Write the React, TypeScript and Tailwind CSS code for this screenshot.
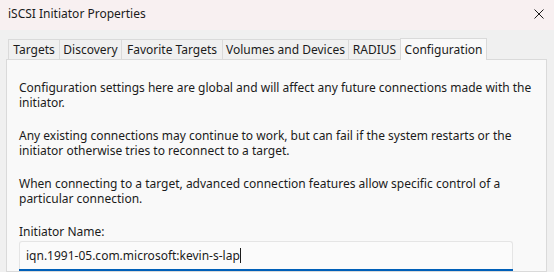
import React from "react";

const tabs = [
  { label: "Targets", w: "w-[52px]" },
  { label: "Discovery", w: "w-[63px]" },
  { label: "Favorite Targets", w: "w-[102px]" },
  { label: "Volumes and Devices", w: "w-[127px]" },
  { label: "RADIUS", w: "w-[53px]" },
];

export default function App() {
  return (
    <div
      className="w-[554px] h-[272px] overflow-hidden bg-[#f0f0f0] text-[#1b1b1b] flex flex-col"
      style={{ fontFamily: '"Noto Sans", "Open Sans", sans-serif' }}
    >
      <div className="h-[30px] shrink-0 bg-[#f8f0f1] flex items-center justify-between pl-[8px] pr-[10px]">
        <span className="text-[12px] leading-[15px] -mt-[3px]">iSCSI Initiator Properties</span>
        <svg width="10" height="10" viewBox="0 0 10 10" className="-mt-[3px]">
          <path d="M0.5 0.5 L9.5 9.5 M9.5 0.5 L0.5 9.5" stroke="#1b1b1b" strokeWidth="1" fill="none" />
        </svg>
      </div>
      <div className="flex-1 flex flex-col px-[6px] pt-[7px]">
        <div className="flex items-end h-[22px] pl-[2px] relative z-10">
          {tabs.map((t) => (
            <div
              key={t.label}
              className={`${t.w} h-[20px] border border-b-0 border-[#dadada] -ml-px first:ml-0 bg-[#f0f0f0] flex items-center justify-center text-[12px] leading-[15px] whitespace-nowrap`}
            >
              {t.label}
            </div>
          ))}
          <div className="w-[87px] h-[22px] -ml-px border border-b-0 border-[#dadada] bg-[#f9f9f9] flex items-start justify-center pt-[3px] text-[12px] leading-[15px] whitespace-nowrap -mb-px">
            Configuration
          </div>
        </div>
        <div className="flex-1 w-[541px] bg-[#f9f9f9] border border-[#dadada] pl-[12px] pt-[20px]">
          <div className="text-[12px] leading-[15px] w-[524px]">
            <p className="mb-[18px]">
              Configuration settings here are global and will affect any future connections made with the initiator.
            </p>
            <p className="mb-[18px]">
              Any existing connections may continue to work, but can fail if the system restarts or the initiator otherwise tries to reconnect to a target.
            </p>
            <p className="mb-[18px]">
              When connecting to a target, advanced connection features allow specific control of a particular connection.
            </p>
            <p className="mb-[2px]">Initiator Name:</p>
          </div>
          <div className="w-[494px] h-[30px] bg-[#fbfbfb] border border-[#e5e5e5] border-b-0 rounded-t-[3px] flex flex-col">
            <div className="flex-1 flex items-center pl-[6px] text-[12px] leading-[15px]">
              <span>iqn.1991-05.com.microsoft:kevin-s-lap</span>
              <span className="inline-block w-px h-[15px] bg-[#1b1b1b]" />
            </div>
            <div className="h-[2px] bg-[#005fb8] -mx-px" />
          </div>
        </div>
      </div>
    </div>
  );
}
